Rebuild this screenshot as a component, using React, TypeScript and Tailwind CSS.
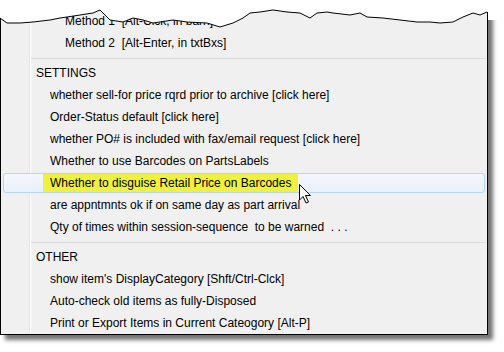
import React from 'react';

const font = { fontFamily: '"Liberation Sans", Arial, sans-serif' };

const Row: React.FC<{ text: string; pad?: string }> = ({ text, pad = 'pl-[49px]' }) => (
    <div className={`h-[22px] flex items-center ${pad} text-[12px] text-black whitespace-pre`}>{text}</div>
);

const Sep: React.FC = () => (
    <div className="h-[8px] flex items-center pl-[30px] pr-[2px]">
        <div className="h-px w-full bg-[#dcdcdc]" />
    </div>
);

const torn =
    '0,18 7,23 20,23 33,22 50,20 60,18 67,17 80,15 93,13 100,10 105,15 110,20 123,22 133,18 143,20 153,23 173,20 187,22 207,23 220,27 233,23 243,18 250,13 260,12 273,10 287,12 300,13 310,18 317,13 327,12 333,13 350,15 360,13 367,17 383,18 400,20 417,22 430,22 440,23 453,22 463,17 473,13 480,15 487,12';

const App: React.FC = () => {
    return (
        <div className="relative w-[504px] h-[352px] bg-white overflow-hidden" style={font}>
            <div className="w-[488px] h-[335px] border-x border-b border-black bg-[#f0f0f0] bg-[linear-gradient(to_right,transparent_28px,#e2e3e3_28px,#e2e3e3_29px,#ffffff_29px,#ffffff_30px,transparent_30px)] pt-[10px] shadow-[5px_5px_4px_rgba(0,0,0,0.55)]">
                <Row text="Method 1  [Alt-Clck, in barn]" pad="pl-[64px]" />
                <Row text="Method 2  [Alt-Enter, in txtBxs]" pad="pl-[64px]" />
                <Sep />
                <Row text="SETTINGS" pad="pl-[35px]" />
                <Row text="whether sell-for price rqrd prior to archive [click here]" />
                <Row text="Order-Status default [click here]" />
                <Row text="whether PO# is included with fax/email request [click here]" />
                <Row text="Whether to use Barcodes on PartsLabels" />
                <div className="h-[22px] py-px px-[2px]">
                    <div className="h-[20px] rounded-[3px] border border-[#b9d4f5] bg-[linear-gradient(to_bottom,#f4f7fc,#e9f0fa)] flex items-center pl-[39px]">
                        <span className="h-[18px] flex items-center px-[7px] bg-[#eef23e] text-[12px] text-black">
                            Whether to disguise Retail Price on Barcodes
                        </span>
                    </div>
                </div>
                <Row text="are appntmnts ok if on same day as part arrival" />
                <Row text="Qty of times within session-sequence  to be warned  . . ." />
                <Sep />
                <Row text="OTHER" pad="pl-[35px]" />
                <Row text="show item's DisplayCategory [Shft/Ctrl-Clck]" />
                <Row text="Auto-check old items as fully-Disposed" />
                <Row text="Print or Export Items in Current Cateogory [Alt-P]" />
            </div>

            {/* torn top edge */}
            <svg className="absolute left-0 top-0" width="504" height="30" viewBox="0 0 504 30">
                <polygon points={`0,0 ${torn} 488,12 488,20 504,20 504,0`} fill="#ffffff" />
                <polyline points={torn} fill="none" stroke="#000" strokeWidth="1" />
            </svg>

            {/* mouse pointer */}
            <svg className="absolute left-[298px] top-[183px]" width="16" height="22" viewBox="0 0 16 22">
                <path d="M1.5,1.5 L1.5,17 L5,13.5 L8,20 L10.5,19 L7.5,12.5 L12.5,12.5 Z" fill="#fff" stroke="#000" strokeWidth="1" strokeLinejoin="miter" />
            </svg>
        </div>
    );
};

export default App;
